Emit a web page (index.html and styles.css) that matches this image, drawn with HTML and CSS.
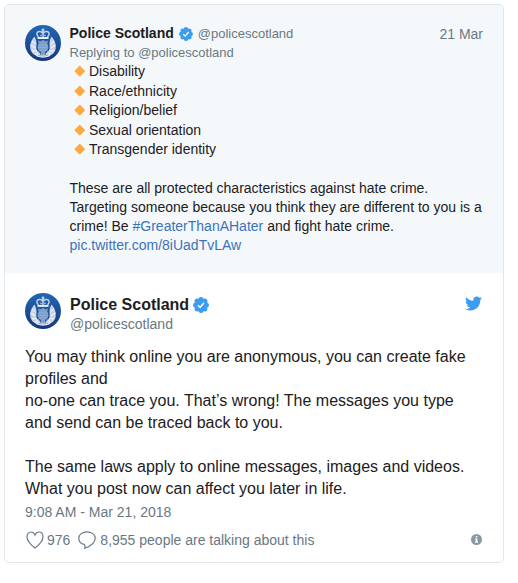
FILE: index.html
```html
<!DOCTYPE html>
<html>
<head>
  <meta charset="utf-8">
  <title>Police Scotland on Twitter</title>
  <link rel="stylesheet" href="styles.css">
</head>
<body>
  <!-- shared icons -->
  <svg class="sprite" width="0" height="0">
    <defs>
      <linearGradient id="crest-bg" x1="0" y1="0" x2="0" y2="1">
        <stop offset="0" stop-color="#2268b4"/>
        <stop offset="1" stop-color="#15377c"/>
      </linearGradient>
    </defs>
    <symbol id="crest" viewBox="0 0 36 36">
      <circle cx="18" cy="18" r="18" fill="url(#crest-bg)"/>
      <path d="M9.500 11.500C6 15 4.500 20 5.500 24.500c.8 3.500 4.500 6.500 9 7.500l1-4c-4-1.500-4.500-4-4-8 .2-3-.5-6-2-8.500z" fill="#c9d5e6"/>
      <path d="M26.500 11.500c3.500 3.500 5 8.500 4 13-.8 3.500-4.500 6.500-9 7.500l-1-4c4-1.500 4.500-4 4-8-.2-3 .5-6 2-8.500z" fill="#c9d5e6"/>
      <path d="M7 16l3.500 3M5.500 20l5 3M7 26l5-.5M10 29.500l3.500-3M29 16l-3.500 3M30.500 20l-5 3M29 26l-5-.5M26 29.500l-3.500-3" stroke="#fff" stroke-width=".9"/>
      <path d="M13.500 12C10.500 9 12 6.200 15 6.500c1.300.1 2.300.9 3 2 .7-1.100 1.700-1.900 3-2 3-.3 4.500 2.500 1.500 5.500M18 12V3.500M16.500 5h3" fill="none" stroke="#c5d4e6" stroke-width="1.500"/>
      <path d="M15 10.500h6" stroke="#8eabd0" stroke-width="1.600"/>
      <path d="M12.500 12h11v1.900h-11z" fill="#e5edf5"/>
      <path d="M13 15.500l2.500.8L18 15l2.500 1.300 2.500-.8-.7 3c2.200 3.500 1 7.500-2.300 8.500v3h-4v-3c-3.300-1-4.500-5-2.300-8.500z" fill="#7d9fcb"/>
      <path d="M14 20h8M13.500 22.500h9M14.500 25h7" stroke="#a5bddb" stroke-width=".5"/>
      <path d="M10.500 28c4.500 2.500 10.500 2.500 15 0l-1 3.300c-4 1.800-9 1.800-13 0z" fill="#dfe7f1"/>
      <path d="M13 30.200c3.500 1 6.500 1 10 0" stroke="#87a1c6" stroke-width=".8" fill="none"/>
    </symbol>
    <symbol id="verified" viewBox="0 0 24 24">
      <g fill="#3b9cf0">
        <circle cx="12" cy="12" r="9"/>
        <circle cx="12" cy="4" r="3.900"/>
        <circle cx="17.700" cy="6.300" r="3.900"/>
        <circle cx="20" cy="12" r="3.900"/>
        <circle cx="17.700" cy="17.700" r="3.900"/>
        <circle cx="12" cy="20" r="3.900"/>
        <circle cx="6.300" cy="17.700" r="3.900"/>
        <circle cx="4" cy="12" r="3.900"/>
        <circle cx="6.300" cy="6.300" r="3.900"/>
      </g>
      <path d="M7.300 12.300l3.300 3.300 5.900-7" fill="none" stroke="#fff" stroke-width="2.300"/>
    </symbol>
  </svg>

  <div class="card">
    <div class="parent">
      <svg class="avatar"><use href="#crest"/></svg>
      <div class="parent-body">
        <div class="parent-header">
          <b class="name">Police Scotland</b>
          <svg class="badge"><use href="#verified"/></svg>
          <span class="handle">@policescotland</span>
          <span class="date">21 Mar</span>
        </div>
        <div class="reply">Replying to @policescotland</div>
        <ul class="list">
          <li><span>Disability</span></li>
          <li><span>Race/ethnicity</span></li>
          <li><span>Religion/belief</span></li>
          <li><span>Sexual orientation</span></li>
          <li><span>Transgender identity</span></li>
        </ul>
        <p class="parent-text">
          <span>These are all protected characteristics against hate crime.</span><br>
          <span>Targeting someone because you think they are different to you is a</span><br>
          <span>crime! Be <a>#GreaterThanAHater</a> and fight hate crime.</span><br>
          <a>pic.twitter.com/8iUadTvLAw</a>
        </p>
      </div>
    </div>

    <div class="tweet">
      <div class="tweet-header">
        <svg class="avatar"><use href="#crest"/></svg>
        <div class="author">
          <div class="author-name">
            <b>Police Scotland</b>
            <svg class="badge"><use href="#verified"/></svg>
          </div>
          <div class="handle">@policescotland</div>
        </div>
        <svg class="bird" viewBox="0 0 24 24"><path d="M23.954 4.569c-.885.389-1.830.654-2.825.775 1.014-.611 1.794-1.574 2.163-2.723-.951.555-2.005.959-3.127 1.184-.896-.959-2.173-1.559-3.591-1.559-2.717 0-4.920 2.203-4.920 4.917 0 .39.045.765.127 1.124C7.691 8.094 4.066 6.130 1.640 3.161c-.427.722-.666 1.561-.666 2.475 0 1.710.87 3.213 2.188 4.096-.807-.026-1.566-.248-2.228-.616v.061c0 2.385 1.693 4.374 3.946 4.827-.413.111-.849.171-1.296.171-.314 0-.615-.03-.916-.086.631 1.953 2.445 3.377 4.604 3.417-1.680 1.319-3.809 2.105-6.102 2.105-.39 0-.779-.023-1.170-.067 2.189 1.394 4.768 2.209 7.557 2.209 9.054 0 13.999-7.496 13.999-13.986 0-.209 0-.42-.015-.63.961-.689 1.800-1.560 2.460-2.548z"/></svg>
      </div>
      <p class="tweet-text">
        <span>You may think online you are anonymous, you can create fake</span><br>
        <span>profiles and</span><br>
        <span>no-one can trace you. That’s wrong! The messages you type</span><br>
        <span>and send can be traced back to you.</span><br>
        <br>
        <span>The same laws apply to online messages, images and videos.</span><br>
        <span>What you post now can affect you later in life.</span>
      </p>
      <div class="time">9:08 AM - Mar 21, 2018</div>
      <div class="actions">
        <svg class="heart" viewBox="0 0 18 18"><path d="M9 17C5.500 14.300 1 10 1 5.700 1 2.900 2.700 1 5 1c1.800 0 3.200 1.100 4 3 .8-1.900 2.200-3 4-3 2.300 0 4 1.900 4 4.700 0 4.300-4.500 8.600-8 11.300z"/></svg>
        <span class="likes">976</span>
        <svg class="bubble" viewBox="0 0 18 18"><path d="M6.300 13.300C3 12.800.8 10.300.8 7.200.8 3.600 4.300.8 9 .8s8.200 2.800 8.200 6.400c0 4.600-4.400 7.800-10.400 10 .5-1.400.3-2.700-.5-3.900z"/></svg>
        <span class="talking">8,955 people are talking about this</span>
        <svg class="info" viewBox="0 0 12 12"><circle cx="6" cy="6" r="6"/><path d="M5.200 2.300h1.700v1.500H5.200zM4.500 5h2.400v3.300h.8v1.200H4.400V8.300h.8V6.200h-.7z"/></svg>
      </div>
    </div>
  </div>
</body>
</html>
```
FILE: styles.css
```css
body {
  margin: 0;
  padding: 4px;
  background-color: #fff;
  color: #1c2022;
  font-family: "Liberation Sans", Arial, sans-serif;
}

p,
ul {
  margin: 0;
  padding: 0;
}

a {
  color: #3b73b8;
}

.sprite {
  display: block;
}

.card {
  box-sizing: border-box;
  width: 500px;
  height: 559px;
  border: 1px solid #e1e8ed;
  border-radius: 5px;
  overflow: hidden;
}

.avatar {
  width: 36px;
  height: 36px;
  flex: none;
}

.handle,
.date,
.reply,
.time,
.actions {
  color: #697882;
}

.parent {
  box-sizing: border-box;
  display: flex;
  gap: 8.500px;
  height: 268px;
  padding: 20px 20px 0;
  background-color: #f5f8fb;
  font-size: 14px;
  line-height: 19px;
  white-space: nowrap;
}

.parent-body {
  flex: 1;
}

.parent-header {
  display: flex;
  align-items: center;
  height: 18px;
}

.parent-header .name {
  margin-top: -1px;
}

.parent-header .badge {
  width: 14px;
  height: 14px;
  margin: -1px 5px 0 5px;
}

.parent-header .handle {
  margin-top: -2px;
  font-size: 13px;
}

.parent-header .date {
  margin-left: auto;
}

.reply {
  font-size: 13px;
}

.list {
  list-style: none;
  line-height: 19.600px;
}

.list li {
  display: flex;
  align-items: center;
}

.list li::before {
  content: "";
  width: 7.500px;
  height: 7.500px;
  margin: 0 6px;
  border-radius: 1px;
  background-color: #fcab40;
  transform: translateY(-1px) rotate(45deg);
}

.parent-text {
  padding-top: 19px;
}

.tweet {
  padding: 20px 20px 0;
}

.tweet-header {
  display: flex;
  gap: 9px;
  height: 36px;
}

.author-name {
  display: flex;
  align-items: center;
  height: 23px;
  font-size: 16px;
}

.author-name .badge {
  width: 16px;
  height: 16px;
  margin-left: 4px;
}

.author .handle {
  font-size: 14px;
  line-height: 17px;
}

.bird {
  width: 17px;
  height: 17px;
  margin: 2px 1px 0 auto;
  fill: #3b9cf0;
}

.tweet-text {
  margin-top: 17px;
  font-size: 16px;
  line-height: 22px;
  white-space: nowrap;
}

.time {
  margin-top: 3px;
  font-size: 14px;
  line-height: 18px;
}

.actions {
  display: flex;
  align-items: center;
  height: 18px;
  margin-top: 10px;
  font-size: 14px;
}

.heart,
.bubble {
  width: 18px;
  height: 18px;
  fill: none;
  stroke: #697b8c;
  stroke-width: 1.200;
}

.heart {
  margin: 0 3px 0 1px;
}

.bubble {
  margin: 0 4px 0 8px;
}

.info {
  width: 11px;
  height: 11px;
  margin: -1px 1px 0 auto;
  fill: #8899a6;
}

.info path {
  fill: #fff;
}
```
